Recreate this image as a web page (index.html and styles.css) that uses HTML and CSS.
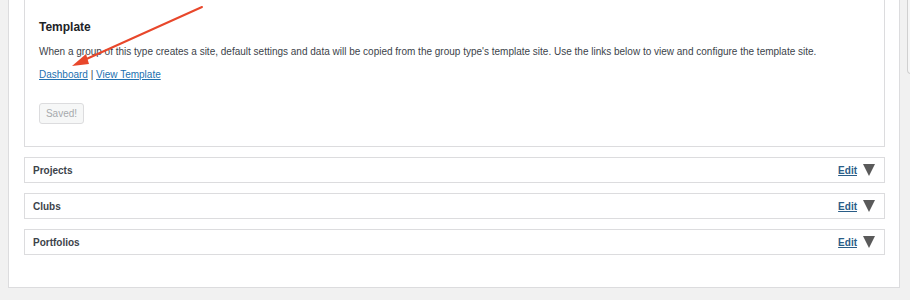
FILE: index.html
```html
<!DOCTYPE html>
<html lang="en">
<head>
  <meta charset="UTF-8">
  <title>Group Type Settings</title>
  <link rel="stylesheet" href="styles.css">
</head>
<body>
  <div class="page">
    <div class="panel">
      <div class="template-box">
        <h2>Template</h2>
        <p class="desc">When a group of this type creates a site, default settings and data will be copied from the group type's template site. Use the links below to view and configure the template site.</p>
        <p class="links"><a href="#">Dashboard</a> | <a href="#">View Template</a></p>
        <button class="btn-saved" disabled>Saved!</button>
      </div>

      <div class="type-row">
        <span class="type-name">Projects</span>
        <span class="type-actions"><a href="#" class="edit">Edit</a><span class="toggle"></span></span>
      </div>
      <div class="type-row">
        <span class="type-name">Clubs</span>
        <span class="type-actions"><a href="#" class="edit">Edit</a><span class="toggle"></span></span>
      </div>
      <div class="type-row">
        <span class="type-name">Portfolios</span>
        <span class="type-actions"><a href="#" class="edit">Edit</a><span class="toggle"></span></span>
      </div>
    </div>
    <div class="side-box"></div>
  </div>

  <!-- annotation arrow -->
  <svg class="callout" width="910" height="300" viewBox="0 0 910 300">
    <line x1="202" y1="7" x2="82" y2="61" stroke="#e8472b" stroke-width="2" stroke-linecap="round"/>
    <polygon points="72,66 86,54 89,64" fill="#e8472b"/>
  </svg>
</body>
</html>
```

FILE: styles.css
```css
* {
  margin: 0;
  padding: 0;
  box-sizing: border-box;
}

body {
  font-family: "Liberation Sans", Arial, sans-serif;
  background: #f1f1f1;
  color: #3c434a;
  width: 910px;
  height: 300px;
  overflow: hidden;
  position: relative;
}

.page {
  display: flex;
  align-items: flex-start;
  padding-left: 8px;
}

.panel {
  flex-shrink: 0;
  width: 892px;
  background: #fff;
  border: 1px solid #dcdcde;
  border-top: none;
  padding: 0 14px 32px 15px;
  display: flex;
  flex-direction: column;
  gap: 10px;
}

.template-box {
  border: 1px solid #dcdcde;
  border-top: none;
  padding: 19px 14px 22px;
}

.template-box h2 {
  font-size: 12px;
  line-height: 16px;
  font-weight: bold;
  color: #1d2327;
}

.desc {
  font-size: 10px;
  line-height: 14px;
  margin-top: 10px;
}

.links {
  font-size: 10px;
  line-height: 14px;
  margin-top: 9px;
}

.links a {
  color: #2271b1;
}

.btn-saved {
  margin-top: 21px;
  height: 21px;
  width: 45px;
  font-family: inherit;
  font-size: 10px;
  color: #a7aaad;
  background: #f6f7f7;
  border: 1px solid #dcdcde;
  border-radius: 3px;
}

.type-row {
  height: 26px;
  border: 1px solid #dcdcde;
  display: flex;
  align-items: center;
  justify-content: space-between;
  padding: 0 9px 0 8px;
}

.type-name {
  font-size: 10px;
  font-weight: bold;
  color: #3c434a;
}

.type-actions {
  display: flex;
  align-items: center;
  gap: 6px;
}

.edit {
  font-size: 10px;
  font-weight: bold;
  color: #2a5d87;
}

.toggle {
  width: 0;
  height: 0;
  border-left: 6px solid transparent;
  border-right: 6px solid transparent;
  border-top: 12px solid #5a5a5a;
}

.side-box {
  flex-shrink: 0;
  margin-left: 7px;
  width: 20px;
  height: 74px;
  border: 1px solid #d0d0d0;
  border-top: none;
  border-radius: 0 0 4px 4px;
  background: #f6f6f6;
}

.callout {
  position: absolute;
  left: 0;
  top: 0;
  pointer-events: none;
}
```
